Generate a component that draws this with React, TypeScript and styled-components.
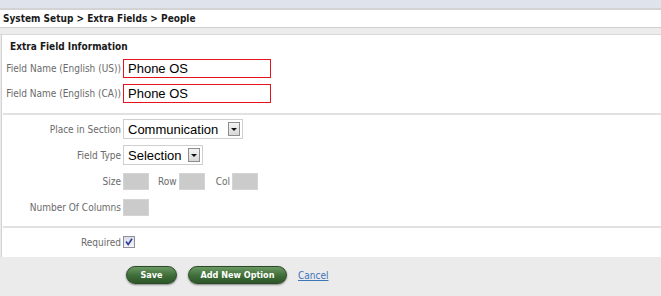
import React from "react";
import styled, { createGlobalStyle } from "styled-components";

const GlobalStyle = createGlobalStyle`
  html, body {
    margin: 0;
    padding: 0;
    background: #ffffff;
  }
  body {
    font-family: "DejaVu Sans Condensed", "DejaVu Sans", sans-serif;
    width: 661px;
    height: 296px;
    overflow: hidden;
  }
`;

const Page = styled.div`
  display: flex;
  flex-direction: column;
  width: 661px;
  height: 296px;
  background: #ebebeb;
  & > * {
    flex-shrink: 0;
  }
`;

const TopBar = styled.div`
  height: 8px;
  background: #dfe4ec;
  border-bottom: 2px solid #d3d3d3;
`;

const Crumbs = styled.div`
  height: 17px;
  background: #ffffff;
  padding-left: 3px;
  display: flex;
  align-items: center;
  font-weight: bold;
  font-size: 10px;
  color: #1a1a1a;
`;

const Strip = styled.div`
  height: 6px;
  background: #ececec;
  border-top: 1px solid #cfcfcf;
  border-bottom: 1px solid #d8d8d8;
`;

const Panel = styled.div`
  margin-left: 1px;
  border-left: 1px solid #d2d2d2;
  background: #ffffff;
  display: flex;
  flex-direction: column;
`;

const Section = styled.div<{ $top: number; $bottom: number; $last?: boolean }>`
  padding: ${(p) => p.$top}px 0 ${(p) => p.$bottom}px 0;
  border-bottom: ${(p) => (p.$last ? "none" : "2px solid #e1e1e1")};
  margin-left: 1px;
`;

const Heading = styled.div`
  height: 14px;
  line-height: 14px;
  padding-left: 7px;
  margin-bottom: 2px;
  font-weight: bold;
  font-size: 10px;
  color: #1a1a1a;
`;

const Row = styled.div<{ $h: number }>`
  display: grid;
  grid-template-columns: 120px auto;
  align-items: center;
  height: ${(p) => p.$h}px;
`;

const Label = styled.span`
  text-align: right;
  padding-right: 2px;
  font-size: 10px;
  color: #6a6a6a;
  white-space: nowrap;
`;

const Controls = styled.div`
  display: flex;
  align-items: center;
`;

const TextInput = styled.div`
  box-sizing: border-box;
  width: 148px;
  height: 19px;
  border: 1px solid #e8121b;
  padding-left: 4px;
  display: flex;
  align-items: center;
  font-family: "Liberation Sans", Arial, sans-serif;
  font-size: 13px;
  color: #000;
`;

const Select = styled.div<{ $w: number }>`
  box-sizing: border-box;
  width: ${(p) => p.$w}px;
  height: 20px;
  border: 1px solid #cfcfcf;
  display: flex;
  align-items: center;
  justify-content: space-between;
  padding: 0 2px 0 4px;
  font-family: "Liberation Sans", Arial, sans-serif;
  font-size: 13px;
  color: #000;
  background: #fff;
`;

const Arrow = styled.span`
  box-sizing: border-box;
  width: 12px;
  height: 14px;
  border: 1px solid #8d8d8d;
  background: linear-gradient(#f4f4f4, #d8d8d8);
  display: flex;
  align-items: center;
  justify-content: center;
  &::after {
    content: "";
    border-left: 3px solid transparent;
    border-right: 3px solid transparent;
    border-top: 3px solid #111;
  }
`;

const GrayBox = styled.span`
  box-sizing: border-box;
  width: 26px;
  height: 17px;
  background: #cbcbcb;
  border: 1px solid #d4d4d4;
`;

const InlineLabel = styled.span<{ $ml: number }>`
  margin: 0 2px 0 ${(p) => p.$ml}px;
  font-size: 10px;
  color: #6a6a6a;
`;

const Check = styled.span`
  box-sizing: border-box;
  width: 12px;
  height: 12px;
  border: 1px solid #8f8f9f;
  background: linear-gradient(#dcdce4, #f6f6f8);
  display: flex;
  align-items: center;
  justify-content: center;
`;

const Footer = styled.div`
  flex: 1;
  display: flex;
  align-items: flex-start;
  padding: 9px 0 0 126px;
  gap: 11px;
`;

const Button = styled.button<{ $w: number }>`
  box-sizing: border-box;
  width: ${(p) => p.$w}px;
  height: 18px;
  border-radius: 9px;
  border: 1px solid #2b4a27;
  background: linear-gradient(#6a9862, #3e6d38 55%, #2d5629);
  box-shadow: 0 1px 2px rgba(0, 0, 0, 0.45);
  color: #ffffff;
  font-family: "DejaVu Sans Condensed", "DejaVu Sans", sans-serif;
  font-weight: bold;
  font-size: 9px;
  padding: 0;
`;

const CancelLink = styled.a`
  font-size: 10px;
  color: #3b74b8;
  text-decoration: underline;
  margin-top: 4px;
`;

export default function App() {
  return (
    <>
      <GlobalStyle />
      <Page>
        <TopBar />
        <Crumbs>System Setup &gt; Extra Fields &gt; People</Crumbs>
        <Strip />
        <Panel>
          <Section $top={5} $bottom={7}>
            <Heading>Extra Field Information</Heading>
            <Row $h={25}>
              <Label>Field Name (English (US))</Label>
              <Controls>
                <TextInput>Phone OS</TextInput>
              </Controls>
            </Row>
            <Row $h={25}>
              <Label>Field Name (English (CA))</Label>
              <Controls>
                <TextInput>Phone OS</TextInput>
              </Controls>
            </Row>
          </Section>
          <Section $top={1} $bottom={6}>
            <Row $h={26}>
              <Label>Place in Section</Label>
              <Controls>
                <Select $w={120}>
                  Communication
                  <Arrow />
                </Select>
              </Controls>
            </Row>
            <Row $h={26}>
              <Label>Field Type</Label>
              <Controls>
                <Select $w={80}>
                  Selection
                  <Arrow />
                </Select>
              </Controls>
            </Row>
            <Row $h={26}>
              <Label>Size</Label>
              <Controls>
                <GrayBox />
                <InlineLabel $ml={9}>Row</InlineLabel>
                <GrayBox />
                <InlineLabel $ml={11}>Col</InlineLabel>
                <GrayBox />
              </Controls>
            </Row>
            <Row $h={26}>
              <Label>Number Of Columns</Label>
              <Controls>
                <GrayBox />
              </Controls>
            </Row>
          </Section>
          <Section $top={1} $bottom={2} $last>
            <Row $h={26}>
              <Label>Required</Label>
              <Controls>
                <Check>
                  <svg width="8" height="8" viewBox="0 0 8 8">
                    <path d="M1 3.5 L3.2 6.5 L7 0.8" fill="none" stroke="#2c3f96" strokeWidth="1.6" />
                  </svg>
                </Check>
              </Controls>
            </Row>
          </Section>
        </Panel>
        <Footer>
          <Button $w={51}>Save</Button>
          <Button $w={99}>Add New Option</Button>
          <CancelLink href="#">Cancel</CancelLink>
        </Footer>
      </Page>
    </>
  );
}
